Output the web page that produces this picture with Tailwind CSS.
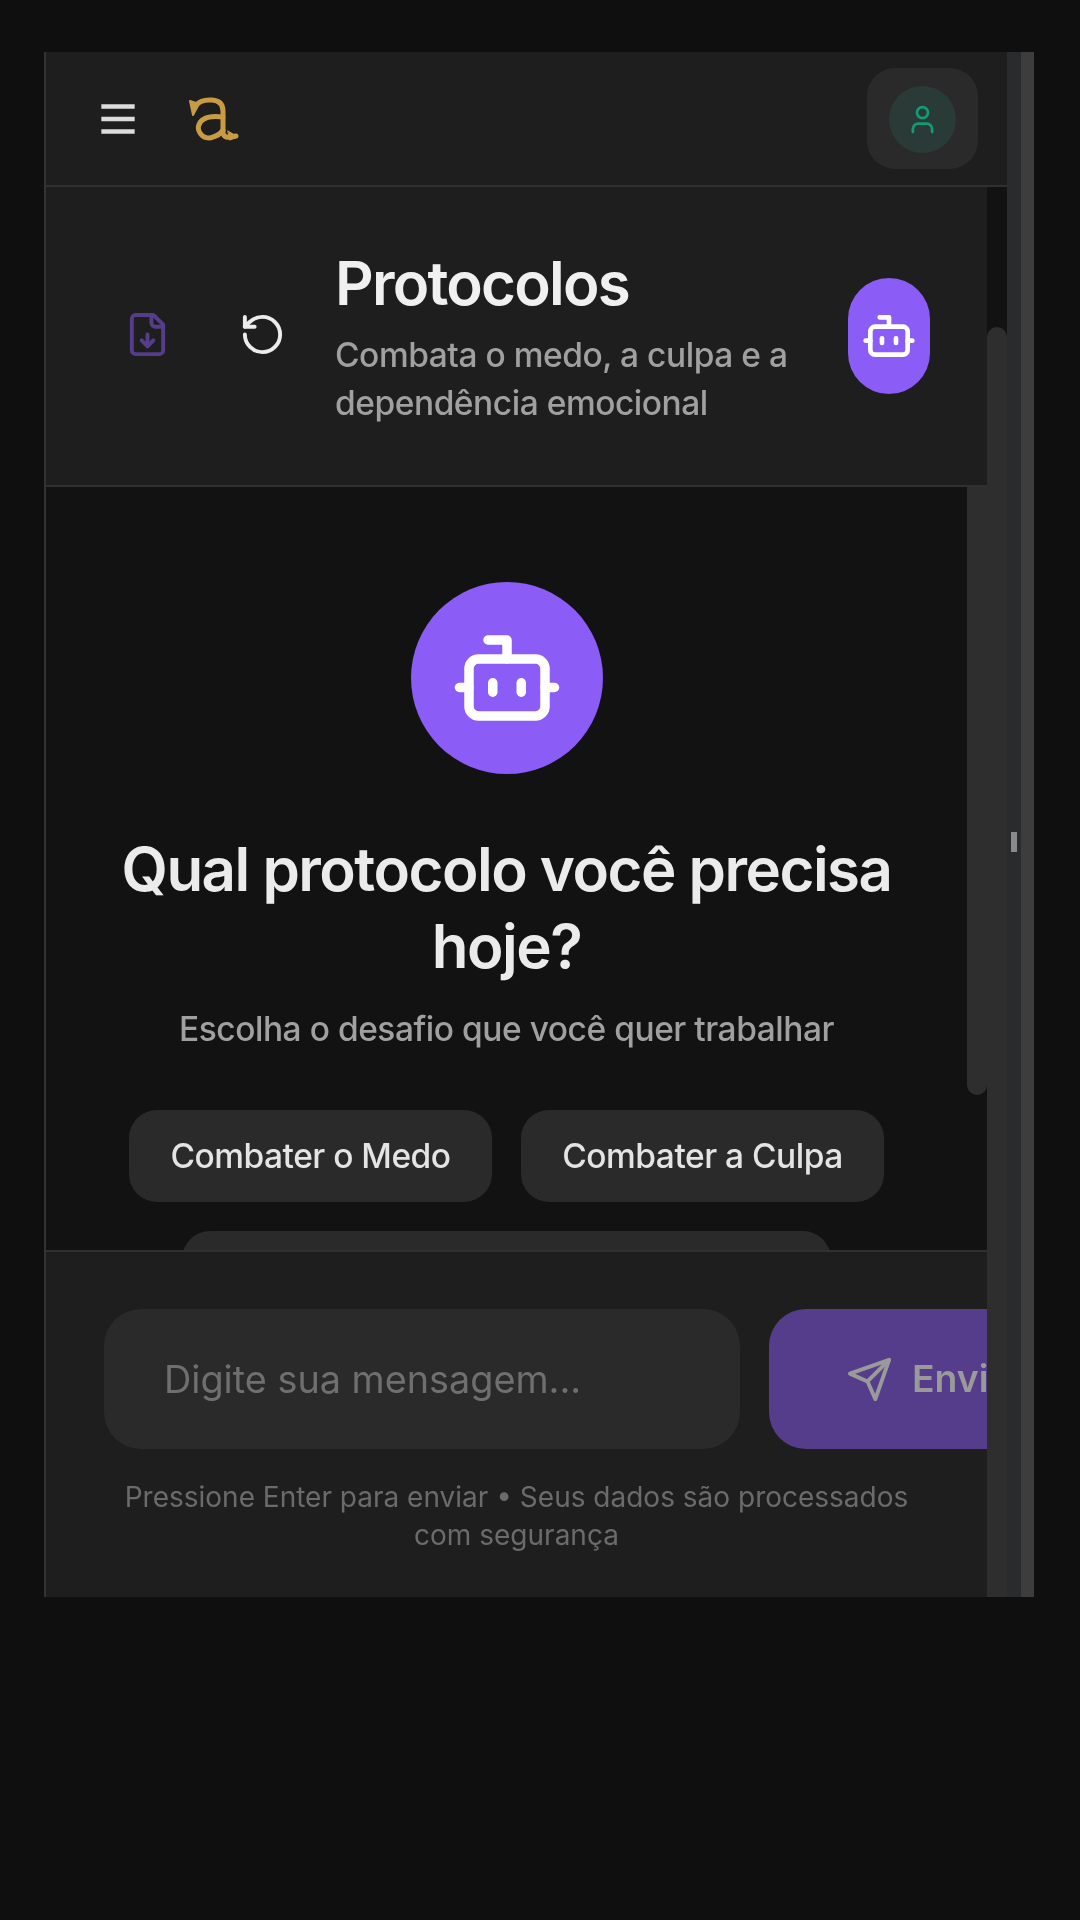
<!DOCTYPE html>
<html lang="pt-BR">
<head>
    <meta charset="UTF-8">
    <meta name="viewport" content="width=device-width, initial-scale=1.0">
    <title>Protocolos</title>
    <script src="https://cdn.jsdelivr.net/npm/@tailwindcss/browser@4"></script>
</head>
<body class="bg-[#0f0f0f] min-h-screen font-['Inter',sans-serif] pt-[52px] pl-[44px]">
    <div class="flex w-[990px] h-[1545px] border-l-2 border-[#333333] overflow-hidden blur-[0.6px]">
        <div class="w-[961px] shrink-0 flex flex-col">
            <!-- Top bar -->
            <header class="h-[135px] shrink-0 bg-[#1e1e1e] border-b-2 border-[#303030] flex items-center pl-[47px] pr-[29px]">
                <svg class="w-[50px] h-[50px] text-[#dcdcdc]" viewBox="0 0 24 24" fill="none" stroke="currentColor" stroke-width="2.2"><path d="M4 6h16M4 12h16M4 18h16"/></svg>
                <svg class="w-[50px] h-[44px] ml-[46px] text-[#c89b45]" viewBox="0 0 50 44" fill="none" stroke="currentColor" stroke-width="5" stroke-linecap="round" stroke-linejoin="round"><path d="M6 9C10 4 16 2.500 23 3c8 .5 11 5 11 11V35c0 4 3 6 7 5l6-1"/><path d="M34 20c-8-1-14-1-19 2-6 3-7 10-4 14 3 5 9 6 13 4 4-1 8-4 10-7"/><path d="M1 4l9 3-6 11z" fill="currentColor" stroke-width="2"/><path d="M39 34l10 6-8 3z" fill="currentColor" stroke-width="1"/></svg>
                <div class="ml-auto w-[111px] h-[101px] rounded-[28px] bg-[#2a2a2a] flex items-center justify-center">
                    <div class="w-[67px] h-[67px] mt-[2px] rounded-full bg-[#2a3a36] flex items-center justify-center">
                        <svg class="w-[33px] h-[33px] text-[#139a76]" viewBox="0 0 24 24" fill="none" stroke="currentColor" stroke-width="2" stroke-linecap="round" stroke-linejoin="round"><path d="M19 21v-2a4 4 0 0 0-4-4H9a4 4 0 0 0-4 4v2"/><circle cx="12" cy="7" r="4"/></svg>
                    </div>
                </div>
            </header>
            <div class="flex-1 flex min-h-0">
                <div class="w-[941px] shrink-0 flex flex-col">
                    <!-- Page header -->
                    <section class="h-[300px] shrink-0 bg-[#1e1e1e] border-b-2 border-[#303030] flex items-center pl-[55px]">
                        <button class="w-[93px] h-[93px] mb-[4px] flex items-center justify-center text-[#553d8b]">
                            <svg class="w-[47px] h-[47px]" viewBox="0 0 24 24" fill="none" stroke="currentColor" stroke-width="2" stroke-linecap="round" stroke-linejoin="round"><path d="M15 2H6a2 2 0 0 0-2 2v16a2 2 0 0 0 2 2h12a2 2 0 0 0 2-2V7Z"/><path d="M14 2v4a2 2 0 0 0 2 2h4"/><path d="M12 18v-6"/><path d="m9 15 3 3 3-3"/></svg>
                        </button>
                        <button class="w-[93px] h-[93px] mb-[4px] ml-[22px] flex items-center justify-center text-[#ececec]">
                            <svg class="w-[47px] h-[47px]" viewBox="0 0 24 24" fill="none" stroke="currentColor" stroke-width="2" stroke-linecap="round" stroke-linejoin="round"><path d="M3 12a9 9 0 1 0 9-9 9.75 9.75 0 0 0-6.74 2.74L3 8"/><path d="M3 3v5h5"/></svg>
                        </button>
                        <div class="ml-[26px] w-[500px]">
                            <h1 class="text-[60px] leading-[74px] mb-[11px] font-semibold tracking-[-1.75px] text-[#f0f0f0]">Protocolos</h1>
                            <p class="text-[33.5px] leading-[48px] tracking-[-0.46px] font-[450] text-[#a0a0a0]">Combata o medo, a culpa e a dependência emocional</p>
                        </div>
                        <button class="ml-[13px] w-[82px] h-[116px] rounded-full bg-[#8b5cf6] flex items-center justify-center text-white">
                            <svg class="w-[56px] h-[56px]" viewBox="0 0 24 24" fill="none" stroke="currentColor" stroke-width="2" stroke-linecap="round" stroke-linejoin="round"><path d="M12 8V4H8"/><rect width="16" height="12" x="4" y="8" rx="2"/><path d="M2 14h2"/><path d="M20 14h2"/><path d="M15 13v2"/><path d="M9 13v2"/></svg>
                        </button>
                    </section>
                    <!-- Chat area -->
                    <div class="flex-1 flex min-h-0 bg-[#121212]">
                        <div class="w-[921px] shrink-0 overflow-hidden flex flex-col items-center pt-[95px]">
                            <div class="w-[192px] h-[192px] rounded-full bg-[#8b5cf6] flex items-center justify-center text-white shrink-0">
                                <svg class="w-[114px] h-[114px]" viewBox="0 0 24 24" fill="none" stroke="currentColor" stroke-width="2" stroke-linecap="round" stroke-linejoin="round"><path d="M12 8V4H8"/><rect width="16" height="12" x="4" y="8" rx="2"/><path d="M2 14h2"/><path d="M20 14h2"/><path d="M15 13v2"/><path d="M9 13v2"/></svg>
                            </div>
                            <h2 class="mt-[57px] w-[800px] text-center text-[60px] leading-[77px] font-semibold tracking-[-1.5px] text-[#ebebeb]">Qual protocolo você precisa hoje?</h2>
                            <p class="mt-[20px] text-[33.5px] leading-[48px] tracking-[-0.46px] font-[450] text-[#a0a0a0]">Escolha o desafio que você quer trabalhar</p>
                            <div class="mt-[57px] w-[800px] flex flex-wrap justify-center gap-x-[29px] gap-y-[29px] shrink-0">
                                <button class="h-[92px] w-[363px] rounded-[28px] bg-[#2a2a2a] text-[33.5px] tracking-[-0.5px] font-[550] text-[#e4e4e4]">Combater o Medo</button>
                                <button class="h-[92px] w-[363px] rounded-[28px] bg-[#2a2a2a] text-[33.5px] tracking-[-0.5px] font-[550] text-[#e4e4e4]">Combater a Culpa</button>
                                <button class="h-[92px] w-[649px] rounded-[28px] bg-[#2a2a2a] text-[33.5px] tracking-[-0.5px] font-[550] text-[#e4e4e4]">Superar a Dependência Emocional</button>
                            </div>
                        </div>
                        <div class="w-[20px] shrink-0">
                            <div class="h-[608px] bg-[#2e2e2e] rounded-b-full"></div>
                        </div>
                    </div>
                    <!-- Input -->
                    <footer class="h-[347px] shrink-0 bg-[#1e1e1e] border-t-2 border-[#303030] overflow-hidden pt-[57px]">
                        <div class="flex gap-[29px] pl-[58px]">
                            <div class="w-[636px] h-[140px] shrink-0 rounded-[37px] bg-[#2a2a2a] flex items-center pl-[60px] text-[37.8px] text-[#6f6f6f]">Digite sua mensagem...</div>
                            <button class="w-[300px] h-[140px] shrink-0 rounded-[37px] bg-[#553d8b] flex items-center pl-[77px] text-[37.33px] font-semibold text-[#9a9a9a]">
                                <svg class="w-[47px] h-[47px] mr-[19px]" viewBox="0 0 24 24" fill="none" stroke="currentColor" stroke-width="2" stroke-linecap="round" stroke-linejoin="round"><path d="m22 2-7 20-4-9-9-4Z"/><path d="M22 2 11 13"/></svg>
                                Enviar
                            </button>
                        </div>
                        <p class="mt-[29px] px-[58px] text-center text-[28px] leading-[38px] text-[#6b6b6b]">Pressione Enter para enviar • Seus dados são processados com segurança</p>
                    </footer>
                </div>
                <div class="w-[20px] shrink-0 bg-[#121212] pt-[140px]">
                    <div class="h-full bg-[#2e2e2e] rounded-t-full"></div>
                </div>
            </div>
        </div>
        <div class="w-[14px] shrink-0 bg-[#2a2b2c] flex justify-center pt-[780px]">
            <div class="w-[6px] h-[20px] bg-[#8a8a8a]"></div>
        </div>
        <div class="w-[13px] shrink-0 bg-[#3d3d3d]"></div>
    </div>
</body>
</html>
